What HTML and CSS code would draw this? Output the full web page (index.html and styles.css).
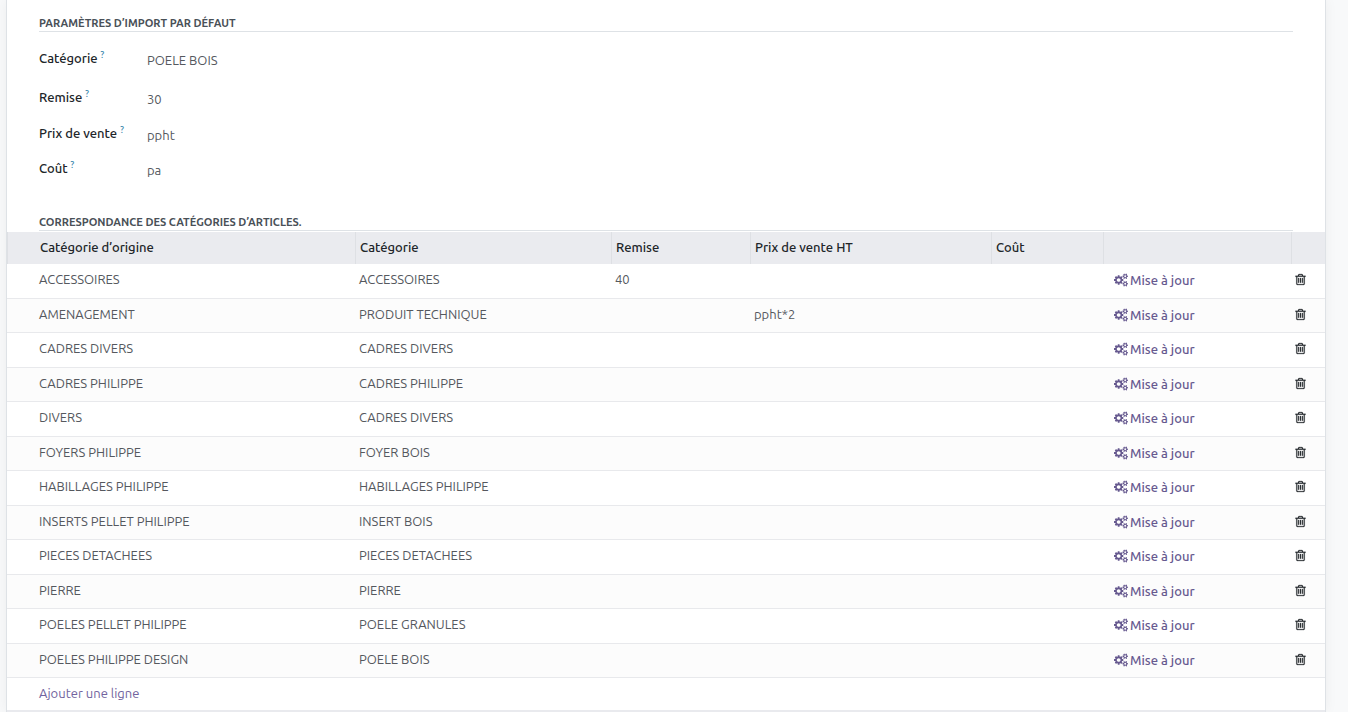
FILE: index.html
```html
<!DOCTYPE html>
<html lang="fr">

<head>

<title>Paramètres d’import</title>
<meta charset="utf-8">

<link rel="stylesheet" href="styles.css">

</head>

<body>

<!-- Icônes -->
<svg class="icons" aria-hidden="true">
	<symbol id="cogs" viewBox="0 0 1920 1792">
		<path d="M896 896q0-106-75-181t-181-75-181 75-75 181 75 181 181 75 181-75 75-181zm768 512q0-52-38-90t-90-38-90 38-38 90q0 53 37.500 90.500t90.500 37.500 90.500-37.500 37.500-90.500zm0-1024q0-52-38-90t-90-38-90 38-38 90q0 53 37.500 90.500t90.500 37.500 90.500-37.500 37.500-90.500zm-384 421v185q0 10-7 19.500t-16 10.500l-155 24q-11 35-32 76 34 48 90 115 7 11 7 20 0 12-7 19-23 30-82.500 89.500t-78.500 59.500q-11 0-21-7l-115-90q-37 19-77 31-11 108-23 155-7 24-30 24h-186q-11 0-20-7.500t-10-17.500l-23-153q-34-10-75-31l-118 89q-7 7-20 7-11 0-21-8-144-133-144-160 0-9 7-19 10-14 41-53t47-61q-23-44-35-82l-152-24q-10-1-17-9.500t-7-19.500v-185q0-10 7-19.500t16-10.500l155-24q11-35 32-76-34-48-90-115-7-11-7-20 0-12 7-20 22-30 82-89t79-59q11 0 21 7l115 90q34-18 77-32 11-108 23-154 7-24 30-24h186q11 0 20 7.500t10 17.500l23 153q34 10 75 31l118-89q8-7 20-7 11 0 21 8 144 133 144 160 0 8-7 19-12 16-42 54t-45 60q23 48 34 82l152 23q10 2 17 10.500t7 19.500zm640 533v140q0 16-149 31-12 27-30 52 51 113 51 138 0 4-4 7-122 71-124 71-8 0-46-47t-52-68q-20 2-30 2t-30-2q-14 21-52 68t-46 47q-2 0-124-71-4-3-4-7 0-25 51-138-18-25-30-52-149-15-149-31v-140q0-16 149-31 13-29 30-52-51-113-51-138 0-4 4-7 4-2 35-20t59-34 30-16q8 0 46 46.500t52 67.500q20-2 30-2t30 2q51-71 92-112l6-2q4 0 124 70 4 3 4 7 0 25-51 138 17 23 30 52 149 15 149 31zm0-1024v140q0 16-149 31-12 27-30 52 51 113 51 138 0 4-4 7-122 71-124 71-8 0-46-47t-52-68q-20 2-30 2t-30-2q-14 21-52 68t-46 47q-2 0-124-71-4-3-4-7 0-25 51-138-18-25-30-52-149-15-149-31v-140q0-16 149-31 13-29 30-52-51-113-51-138 0-4 4-7 4-2 35-20t59-34 30-16q8 0 46 46.500t52 67.500q20-2 30-2t30 2q51-71 92-112l6-2q4 0 124 70 4 3 4 7 0 25-51 138 17 23 30 52 149 15 149 31z"/>
	</symbol>
	<symbol id="trash" viewBox="0 0 1792 1792">
		<path d="M704 736v576q0 14-9 23t-23 9h-64q-14 0-23-9t-9-23v-576q0-14 9-23t23-9h64q14 0 23 9t9 23zm256 0v576q0 14-9 23t-23 9h-64q-14 0-23-9t-9-23v-576q0-14 9-23t23-9h64q14 0 23 9t9 23zm256 0v576q0 14-9 23t-23 9h-64q-14 0-23-9t-9-23v-576q0-14 9-23t23-9h64q14 0 23 9t9 23zm128 724v-948h-896v948q0 22 7 40.500t14.500 27 10.500 8.500h832q3 0 10.500-8.500t14.500-27 7-40.500zm-672-1076h448l-48-117q-7-9-17-11h-317q-10 2-17 11zm928 32v64q0 14-9 23t-23 9h-96v948q0 83-47 143.500t-113 60.500h-832q-66 0-113-58.500t-47-141.500v-952h-96q-14 0-23-9t-9-23v-64q0-14 9-23t23-9h309l70-167q15-37 54-63t79-26h320q40 0 79 26t54 63l70 167h309q14 0 23 9t9 23z"/>
	</symbol>
</svg>

<main class="sheet">

<h2 class="section-title">Paramètres d’import par défaut</h2>

<form class="fields">
	<div class="field field-large">
		<label for="categorie">Catégorie <sup>?</sup></label>
		<input type="text" id="categorie" value="POELE BOIS">
	</div>
	<div class="field">
		<label for="remise">Remise <sup>?</sup></label>
		<input type="text" id="remise" value="30">
	</div>
	<div class="field">
		<label for="prix">Prix de vente <sup>?</sup></label>
		<input type="text" id="prix" value="ppht">
	</div>
	<div class="field">
		<label for="cout">Coût <sup>?</sup></label>
		<input type="text" id="cout" value="pa">
	</div>
</form>

<h2 class="section-title">Correspondance des catégories d’articles.</h2>

<table class="list">
	<colgroup>
		<col class="col-origine">
		<col class="col-categorie">
		<col class="col-remise">
		<col class="col-prix">
		<col class="col-cout">
		<col class="col-maj">
		<col class="col-suppr">
	</colgroup>
	<thead>
		<tr>
			<th>Catégorie d’origine</th>
			<th>Catégorie</th>
			<th>Remise</th>
			<th>Prix de vente HT</th>
			<th>Coût</th>
			<th></th>
			<th></th>
		</tr>
	</thead>
	<tbody>
		<tr>
			<td>ACCESSOIRES</td><td>ACCESSOIRES</td><td>40</td><td></td><td></td>
			<td><button type="button" class="update"><svg><use href="#cogs"/></svg>Mise à jour</button></td>
			<td><button type="button" class="delete" aria-label="Supprimer"><svg><use href="#trash"/></svg></button></td>
		</tr>
		<tr>
			<td>AMENAGEMENT</td><td>PRODUIT TECHNIQUE</td><td></td><td>ppht*2</td><td></td>
			<td><button type="button" class="update"><svg><use href="#cogs"/></svg>Mise à jour</button></td>
			<td><button type="button" class="delete" aria-label="Supprimer"><svg><use href="#trash"/></svg></button></td>
		</tr>
		<tr>
			<td>CADRES DIVERS</td><td>CADRES DIVERS</td><td></td><td></td><td></td>
			<td><button type="button" class="update"><svg><use href="#cogs"/></svg>Mise à jour</button></td>
			<td><button type="button" class="delete" aria-label="Supprimer"><svg><use href="#trash"/></svg></button></td>
		</tr>
		<tr>
			<td>CADRES PHILIPPE</td><td>CADRES PHILIPPE</td><td></td><td></td><td></td>
			<td><button type="button" class="update"><svg><use href="#cogs"/></svg>Mise à jour</button></td>
			<td><button type="button" class="delete" aria-label="Supprimer"><svg><use href="#trash"/></svg></button></td>
		</tr>
		<tr>
			<td>DIVERS</td><td>CADRES DIVERS</td><td></td><td></td><td></td>
			<td><button type="button" class="update"><svg><use href="#cogs"/></svg>Mise à jour</button></td>
			<td><button type="button" class="delete" aria-label="Supprimer"><svg><use href="#trash"/></svg></button></td>
		</tr>
		<tr>
			<td>FOYERS PHILIPPE</td><td>FOYER BOIS</td><td></td><td></td><td></td>
			<td><button type="button" class="update"><svg><use href="#cogs"/></svg>Mise à jour</button></td>
			<td><button type="button" class="delete" aria-label="Supprimer"><svg><use href="#trash"/></svg></button></td>
		</tr>
		<tr>
			<td>HABILLAGES PHILIPPE</td><td>HABILLAGES PHILIPPE</td><td></td><td></td><td></td>
			<td><button type="button" class="update"><svg><use href="#cogs"/></svg>Mise à jour</button></td>
			<td><button type="button" class="delete" aria-label="Supprimer"><svg><use href="#trash"/></svg></button></td>
		</tr>
		<tr>
			<td>INSERTS PELLET PHILIPPE</td><td>INSERT BOIS</td><td></td><td></td><td></td>
			<td><button type="button" class="update"><svg><use href="#cogs"/></svg>Mise à jour</button></td>
			<td><button type="button" class="delete" aria-label="Supprimer"><svg><use href="#trash"/></svg></button></td>
		</tr>
		<tr>
			<td>PIECES DETACHEES</td><td>PIECES DETACHEES</td><td></td><td></td><td></td>
			<td><button type="button" class="update"><svg><use href="#cogs"/></svg>Mise à jour</button></td>
			<td><button type="button" class="delete" aria-label="Supprimer"><svg><use href="#trash"/></svg></button></td>
		</tr>
		<tr>
			<td>PIERRE</td><td>PIERRE</td><td></td><td></td><td></td>
			<td><button type="button" class="update"><svg><use href="#cogs"/></svg>Mise à jour</button></td>
			<td><button type="button" class="delete" aria-label="Supprimer"><svg><use href="#trash"/></svg></button></td>
		</tr>
		<tr>
			<td>POELES PELLET PHILIPPE</td><td>POELE GRANULES</td><td></td><td></td><td></td>
			<td><button type="button" class="update"><svg><use href="#cogs"/></svg>Mise à jour</button></td>
			<td><button type="button" class="delete" aria-label="Supprimer"><svg><use href="#trash"/></svg></button></td>
		</tr>
		<tr>
			<td>POELES PHILIPPE DESIGN</td><td>POELE BOIS</td><td></td><td></td><td></td>
			<td><button type="button" class="update"><svg><use href="#cogs"/></svg>Mise à jour</button></td>
			<td><button type="button" class="delete" aria-label="Supprimer"><svg><use href="#trash"/></svg></button></td>
		</tr>
	</tbody>
	<tfoot>
		<tr>
			<td colspan="7"><a href="#">Ajouter une ligne</a></td>
		</tr>
	</tfoot>
</table>

</main>

</body>

</html>
```
FILE: styles.css
```css
*{
	box-sizing: border-box;
}

body{
	margin: 0;
	background-color: #f8f9fa;
	color: #55585e;
	font-family: Ubuntu, "Noto Sans", sans-serif;
	font-size: 13px;
	line-height: 20px;
}

input, button{
	margin: 0;
	padding: 0;
	border: none;
	background: none;
	color: inherit;
	font: inherit;
}

.icons{
	display: none;
}

.sheet{
	margin: 0 22px 0 6px;
	padding-top: 15px;
	background-color: white;
	border: solid #dee2e6;
	border-width: 0 1px;
	box-shadow: 0 0 12px rgba(0,0,0,0.05);
}

.section-title{
	margin: 0 32px;
	border-bottom: 1px solid #dee2e6;
	color: #495057;
	font-size: 11px;
	line-height: 16px;
	font-weight: 700;
	text-transform: uppercase;
}

.fields{
	margin: 0 32px;
	padding: 10px 0 26px;
}

.field{
	display: flex;
	height: 36px;
	padding-top: 6px;
}

.field-large{
	height: 39px;
}

.field:last-child{
	height: 35px;
	padding-top: 5px;
}

.field label{
	width: 108px;
	color: #212529;
	font-weight: 500;
	line-height: 20px;
	white-space: nowrap;
}

.field sup{
	color: #3a87ad;
	font-size: 9px;
	line-height: 0;
}

.field input{
	flex: 1;
	height: 24px;
}

.list{
	width: 100%;
	margin-top: 1px;
	table-layout: fixed;
	border-spacing: 0;
	border-bottom: 2px solid #e9eaee;
}

.col-origine{ width: 348px; }
.col-categorie{ width: 256px; }
.col-remise{ width: 139px; }
.col-prix{ width: 241px; }
.col-cout{ width: 112px; }
.col-maj{ width: 188px; }
.col-suppr{ width: 34px; }

.list th{
	height: 32px;
	padding: 0 4px 2px;
	background-color: #eaebef;
	border-left: 1px solid #dee0e4;
	color: #212529;
	font-weight: 500;
	text-align: left;
}

.list td{
	height: 34px;
	padding: 0 4px 4px;
	border-bottom: 1px solid #e8e9ec;
}

.list tbody tr:nth-child(odd) td{
	height: 35px;
}

.list tbody tr:nth-child(even){
	background-color: #fcfcfc;
}

.list th:first-child, .list td:first-child{
	padding-left: 32px;
}

.list td:last-child{
	padding: 0 3px 3px;
}

.list tfoot td:first-child{
	height: 32px;
	padding: 0 32px 2px;
	border-bottom: none;
}

.list a{
	color: #71639e;
	text-decoration: none;
}

.update{
	display: flex;
	align-items: center;
	gap: 2px;
	padding: 2px 0 0 7px;
	color: #66598f;
	font-weight: 500;
	cursor: pointer;
}

.update svg{
	width: 14px;
	height: 14px;
	fill: currentColor;
}

.delete{
	display: block;
	color: #212529;
	cursor: pointer;
}

.delete svg{
	display: block;
	width: 13px;
	height: 13px;
	fill: currentColor;
	stroke: currentColor;
	stroke-width: 30;
}
```
